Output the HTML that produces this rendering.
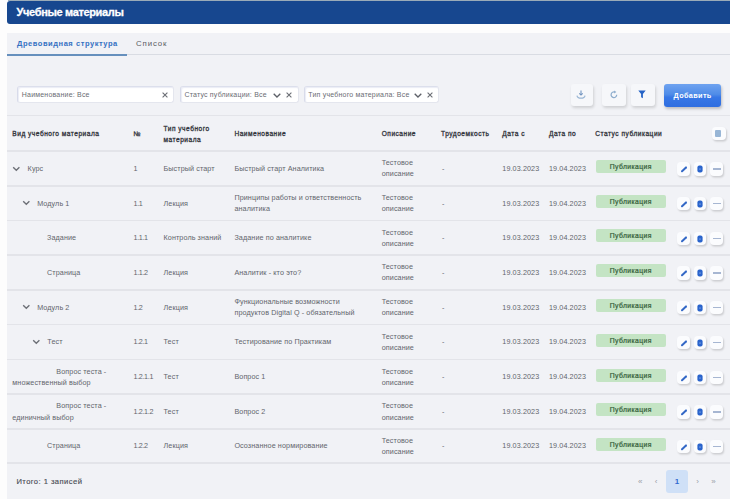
<!DOCTYPE html>
<html><head><meta charset="utf-8">
<style>
*{box-sizing:border-box;margin:0;padding:0}
html{background:#fdfdfd}
html,body{width:730px;height:499px;overflow:hidden;background:#fdfdfd;font-family:"Liberation Sans",sans-serif;color:#4a4d55}
.a{position:absolute}
#topline{left:8px;top:0;width:722px;height:1.2px;background:#9aabb8}
#hdr{left:7px;top:1px;width:723px;height:23px;background:#17478f;border-radius:3px 0 0 3px}
#hdr span{position:absolute;left:9.6px;top:5px;font-size:11px;font-weight:bold;color:#fff;letter-spacing:-0.35px;-webkit-text-stroke:0.3px #fff}
#card{left:7px;top:33px;width:723px;height:466px;background:#f1f2f6}
.tab{position:absolute;top:6.3px;font-size:7.5px;font-weight:bold;letter-spacing:0.55px}
.inp{position:absolute;top:53.3px;height:17px;background:#fff;border:1px solid #e4e6ee;border-left-color:#d8dbea;border-top-color:#dcdfec;box-shadow:inset 1px 1px 1px rgba(140,150,200,0.18);border-radius:3px;font-size:7px;color:#6a6c73;letter-spacing:0.2px}
.inp .t{position:absolute;left:3.5px;top:4.2px;white-space:nowrap}
.ibtn{position:absolute;top:51px;width:21px;height:21.5px;background:#f6f7fa;border-radius:3px;box-shadow:1px 2px 3px rgba(0,0,0,0.14)}
#add{left:656.7px;top:50.6px;width:57.8px;height:23px;border-radius:3px;background:linear-gradient(#6fa3f0 0%,#4f8ce8 45%,#3777e6 58%,#2f6ee0 100%);box-shadow:1px 2px 3px rgba(0,0,0,.22);color:#fff;font-size:7.3px;font-weight:bold;text-align:center;line-height:23px;letter-spacing:0.35px}
.hl{position:absolute;left:0;width:723px;height:1.5px;background:#e3e4e9}
.th{position:absolute;font-size:6.6px;font-weight:normal;-webkit-text-stroke:0.3px #34363d;color:#34363d;white-space:nowrap;line-height:11px;letter-spacing:0.5px}
.td{position:absolute;font-size:7.2px;color:#62656c;white-space:nowrap;line-height:11.3px;letter-spacing:0.1px}
.badge{position:absolute;width:70px;height:13px;background:#c4e4c4;border-radius:2px;color:#35603a;font-size:6.8px;font-weight:normal;-webkit-text-stroke:0.22px #35603a;text-align:center;line-height:13px;letter-spacing:0.4px}
.ab{position:absolute;width:13px;height:13.5px;background:#fbfcfe;border-radius:4px;box-shadow:1px 1.5px 2px rgba(0,0,0,.16)}
</style></head><body>
<div id="topline" class="a"></div>
<div id="hdr" class="a"><span>Учебные материалы</span></div>
<div id="card" class="a">
<div class="tab" style="left:10px;color:#3470c2">Древовидная структура</div>
<div class="tab" style="left:129px;color:#5a5c63;font-weight:normal;font-size:7.8px;letter-spacing:0.9px">Список</div>
<div class="hl" style="top:21px;height:1.2px;background:#d9dce3"></div>
<div class="a" style="left:0;top:20.5px;width:120px;height:2px;background:#6690bd"></div>
<div class="inp" style="left:10.3px;width:156.3px"><span class="t">Наименование: Все</span><svg class="a" style="left:143.3px;top:5px" width="6" height="6" viewBox="0 0 6 6"><path d="M0.6 0.6 L5.4 5.4 M5.4 0.6 L0.6 5.4" stroke="#6b6e75" stroke-width="1.1"/></svg></div>
<div class="inp" style="left:172.9px;width:119.2px"><span class="t">Статус публикации: Все</span><svg class="a" style="left:92.6px;top:6px" width="8" height="5" viewBox="0 0 8 5"><path d="M0.7 0.7 L4 4 L7.3 0.7" stroke="#5d6068" stroke-width="1.3" fill="none"/></svg><svg class="a" style="left:104.9px;top:5px" width="6" height="6" viewBox="0 0 6 6"><path d="M0.6 0.6 L5.4 5.4 M5.4 0.6 L0.6 5.4" stroke="#6b6e75" stroke-width="1.1"/></svg></div>
<div class="inp" style="left:296.8px;width:135.2px"><span class="t">Тип учебного материала: Все</span><svg class="a" style="left:109.7px;top:6px" width="8" height="5" viewBox="0 0 8 5"><path d="M0.7 0.7 L4 4 L7.3 0.7" stroke="#5d6068" stroke-width="1.3" fill="none"/></svg><svg class="a" style="left:122.7px;top:5px" width="6" height="6" viewBox="0 0 6 6"><path d="M0.6 0.6 L5.4 5.4 M5.4 0.6 L0.6 5.4" stroke="#6b6e75" stroke-width="1.1"/></svg></div>
<div class="ibtn" style="left:564px;width:22px"><svg class="a" style="left:5px;top:6px" width="10" height="9" viewBox="0 0 10 9"><path d="M5 0.5 V4.8" stroke="#7395c0" stroke-width="1.1" fill="none"/><path d="M3.3 3.3 L5 5 L6.7 3.3" stroke="#7395c0" stroke-width="1.1" fill="none"/><path d="M1 5.6 Q1.3 8.2 5 8.2 Q8.7 8.2 9 5.6" stroke="#9ab6d4" stroke-width="1.2" fill="none"/></svg></div>
<div class="ibtn" style="left:595px;width:24px"><svg class="a" style="left:7.6px;top:6.4px" width="8" height="9" viewBox="0 0 8 9"><path d="M6.7 4.8 A2.8 2.8 0 1 1 4.8 2.1" stroke="#8eadcd" stroke-width="1.25" fill="none"/><path d="M4.1 0.5 L6.4 2 L4.2 3.6 Z" fill="#8eadcd"/></svg></div>
<div class="ibtn" style="left:624px;width:23.5px"><svg class="a" style="left:6.8px;top:6px" width="8" height="9" viewBox="0 0 8 9"><path d="M0.3 0.6 H7.7 L4.9 4 V8.2 L3.1 7.2 V4 Z" fill="#2563c6"/></svg></div>
<div id="add" class="a">Добавить</div>
<div class="hl" style="top:81.75px"></div>
<div class="hl" style="top:117.25px"></div>
<div class="hl" style="top:152.05px"></div>
<div class="hl" style="top:186.65px"></div>
<div class="hl" style="top:221.25px"></div>
<div class="hl" style="top:256.05px"></div>
<div class="hl" style="top:290.65px"></div>
<div class="hl" style="top:325.65px"></div>
<div class="hl" style="top:360.35px"></div>
<div class="hl" style="top:395.05px"></div>
<div class="hl" style="top:429.15px"></div>
<div class="th" style="left:5.3px;top:95.0px">Вид учебного материала</div>
<div class="th" style="left:126.5px;top:95.0px">№</div>
<div class="th" style="left:156.5px;top:89.5px">Тип учебного<br>материала</div>
<div class="th" style="left:227.4px;top:95.0px">Наименование</div>
<div class="th" style="left:374.7px;top:95.0px">Описание</div>
<div class="th" style="left:434.0px;top:95.0px">Трудоемкость</div>
<div class="th" style="left:495.3px;top:95.0px">Дата с</div>
<div class="th" style="left:542.0px;top:95.0px">Дата по</div>
<div class="th" style="left:588.3px;top:95.0px">Статус публикации</div>
<div class="ab" style="left:705.0px;top:93.7px;width:14px;height:13.5px"><div class="a" style="left:3px;top:3.5px;width:5.8px;height:6.8px;background:#98b6d6;border-radius:1px"></div></div>
<div class="td" style="left:20.6px;top:129.8px">Курс</div>
<svg class="a" style="left:5.1px;top:132.5px" width="9" height="6" viewBox="0 0 9 6"><path d="M1.2 1.2 L4.3 4.3 L7.4 1.2" fill="none" stroke="#6c6f76" stroke-width="1.35"/></svg>
<div class="td" style="left:126.5px;top:129.8px;letter-spacing:-0.35px">1</div>
<div class="td" style="left:156.5px;top:129.8px">Быстрый старт</div>
<div class="td" style="left:227.4px;top:129.8px">Быстрый старт Аналитика</div>
<div class="td" style="left:374.7px;top:124.2px">Тестовое<br>описание</div>
<div class="td" style="left:435.0px;top:129.8px">-</div>
<div class="td" style="left:495.3px;top:129.8px">19.03.2023</div>
<div class="td" style="left:542.0px;top:129.8px">19.04.2023</div>
<div class="badge" style="left:588.8px;top:127.1px">Публикация</div>
<div class="ab" style="left:669.8px;top:129.2px"><svg class="a" style="left:3px;top:3px" width="8" height="8" viewBox="0 0 8 8"><path d="M2 6.2 L6 2.4" stroke="#3267c6" stroke-width="2" stroke-linecap="round"/></svg></div>
<div class="ab" style="left:687.0px;top:129.2px;width:12px"><svg class="a" style="left:3.3px;top:3px" width="6" height="8" viewBox="0 0 6 8"><rect x="0.4" y="0.6" width="5.2" height="7" rx="2" fill="#2a64cc"/><rect x="2.4" y="3.4" width="1.2" height="1.4" fill="#7fa6e8"/></svg></div>
<div class="ab" style="left:703.3px;top:129.2px"><div class="a" style="left:2.5px;top:6.2px;width:8px;height:1px;background:#a6b6d2;height:1.3px"></div></div>
<div class="td" style="left:30.2px;top:164.6px">Модуль 1</div>
<svg class="a" style="left:14.7px;top:167.2px" width="9" height="6" viewBox="0 0 9 6"><path d="M1.2 1.2 L4.3 4.3 L7.4 1.2" fill="none" stroke="#6c6f76" stroke-width="1.35"/></svg>
<div class="td" style="left:126.5px;top:164.6px;letter-spacing:-0.35px">1.1</div>
<div class="td" style="left:156.5px;top:164.6px">Лекция</div>
<div class="td" style="left:227.4px;top:158.9px">Принципы работы и ответственность<br>аналитика</div>
<div class="td" style="left:374.7px;top:158.9px">Тестовое<br>описание</div>
<div class="td" style="left:435.0px;top:164.6px">-</div>
<div class="td" style="left:495.3px;top:164.6px">19.03.2023</div>
<div class="td" style="left:542.0px;top:164.6px">19.04.2023</div>
<div class="badge" style="left:588.8px;top:161.8px">Публикация</div>
<div class="ab" style="left:669.8px;top:163.9px"><svg class="a" style="left:3px;top:3px" width="8" height="8" viewBox="0 0 8 8"><path d="M2 6.2 L6 2.4" stroke="#3267c6" stroke-width="2" stroke-linecap="round"/></svg></div>
<div class="ab" style="left:687.0px;top:163.9px;width:12px"><svg class="a" style="left:3.3px;top:3px" width="6" height="8" viewBox="0 0 6 8"><rect x="0.4" y="0.6" width="5.2" height="7" rx="2" fill="#2a64cc"/><rect x="2.4" y="3.4" width="1.2" height="1.4" fill="#7fa6e8"/></svg></div>
<div class="ab" style="left:703.3px;top:163.9px"><div class="a" style="left:2.5px;top:6.2px;width:8px;height:1px;background:#a6b6d2;height:1.3px"></div></div>
<div class="td" style="left:40.0px;top:199.1px">Задание</div>
<div class="td" style="left:126.5px;top:199.1px;letter-spacing:-0.35px">1.1.1</div>
<div class="td" style="left:156.5px;top:199.1px">Контроль знаний</div>
<div class="td" style="left:227.4px;top:199.1px">Задание по аналитике</div>
<div class="td" style="left:374.7px;top:193.5px">Тестовое<br>описание</div>
<div class="td" style="left:435.0px;top:199.1px">-</div>
<div class="td" style="left:495.3px;top:199.1px">19.03.2023</div>
<div class="td" style="left:542.0px;top:199.1px">19.04.2023</div>
<div class="badge" style="left:588.8px;top:196.4px">Публикация</div>
<div class="ab" style="left:669.8px;top:198.5px"><svg class="a" style="left:3px;top:3px" width="8" height="8" viewBox="0 0 8 8"><path d="M2 6.2 L6 2.4" stroke="#3267c6" stroke-width="2" stroke-linecap="round"/></svg></div>
<div class="ab" style="left:687.0px;top:198.5px;width:12px"><svg class="a" style="left:3.3px;top:3px" width="6" height="8" viewBox="0 0 6 8"><rect x="0.4" y="0.6" width="5.2" height="7" rx="2" fill="#2a64cc"/><rect x="2.4" y="3.4" width="1.2" height="1.4" fill="#7fa6e8"/></svg></div>
<div class="ab" style="left:703.3px;top:198.5px"><div class="a" style="left:2.5px;top:6.2px;width:8px;height:1px;background:#a6b6d2;height:1.3px"></div></div>
<div class="td" style="left:40.0px;top:233.9px">Страница</div>
<div class="td" style="left:126.5px;top:233.9px;letter-spacing:-0.35px">1.1.2</div>
<div class="td" style="left:156.5px;top:233.9px">Лекция</div>
<div class="td" style="left:227.4px;top:233.9px">Аналитик - кто это?</div>
<div class="td" style="left:374.7px;top:228.2px">Тестовое<br>описание</div>
<div class="td" style="left:435.0px;top:233.9px">-</div>
<div class="td" style="left:495.3px;top:233.9px">19.03.2023</div>
<div class="td" style="left:542.0px;top:233.9px">19.04.2023</div>
<div class="badge" style="left:588.8px;top:231.1px">Публикация</div>
<div class="ab" style="left:669.8px;top:233.2px"><svg class="a" style="left:3px;top:3px" width="8" height="8" viewBox="0 0 8 8"><path d="M2 6.2 L6 2.4" stroke="#3267c6" stroke-width="2" stroke-linecap="round"/></svg></div>
<div class="ab" style="left:687.0px;top:233.2px;width:12px"><svg class="a" style="left:3.3px;top:3px" width="6" height="8" viewBox="0 0 6 8"><rect x="0.4" y="0.6" width="5.2" height="7" rx="2" fill="#2a64cc"/><rect x="2.4" y="3.4" width="1.2" height="1.4" fill="#7fa6e8"/></svg></div>
<div class="ab" style="left:703.3px;top:233.2px"><div class="a" style="left:2.5px;top:6.2px;width:8px;height:1px;background:#a6b6d2;height:1.3px"></div></div>
<div class="td" style="left:30.2px;top:268.6px">Модуль 2</div>
<svg class="a" style="left:14.7px;top:271.2px" width="9" height="6" viewBox="0 0 9 6"><path d="M1.2 1.2 L4.3 4.3 L7.4 1.2" fill="none" stroke="#6c6f76" stroke-width="1.35"/></svg>
<div class="td" style="left:126.5px;top:268.6px;letter-spacing:-0.35px">1.2</div>
<div class="td" style="left:156.5px;top:268.6px">Лекция</div>
<div class="td" style="left:227.4px;top:262.9px">Функциональные возможности<br>продуктов Digital Q - обязательный</div>
<div class="td" style="left:374.7px;top:262.9px">Тестовое<br>описание</div>
<div class="td" style="left:435.0px;top:268.6px">-</div>
<div class="td" style="left:495.3px;top:268.6px">19.03.2023</div>
<div class="td" style="left:542.0px;top:268.6px">19.04.2023</div>
<div class="badge" style="left:588.8px;top:265.8px">Публикация</div>
<div class="ab" style="left:669.8px;top:267.9px"><svg class="a" style="left:3px;top:3px" width="8" height="8" viewBox="0 0 8 8"><path d="M2 6.2 L6 2.4" stroke="#3267c6" stroke-width="2" stroke-linecap="round"/></svg></div>
<div class="ab" style="left:687.0px;top:267.9px;width:12px"><svg class="a" style="left:3.3px;top:3px" width="6" height="8" viewBox="0 0 6 8"><rect x="0.4" y="0.6" width="5.2" height="7" rx="2" fill="#2a64cc"/><rect x="2.4" y="3.4" width="1.2" height="1.4" fill="#7fa6e8"/></svg></div>
<div class="ab" style="left:703.3px;top:267.9px"><div class="a" style="left:2.5px;top:6.2px;width:8px;height:1px;background:#a6b6d2;height:1.3px"></div></div>
<div class="td" style="left:40.3px;top:303.4px">Тест</div>
<svg class="a" style="left:24.8px;top:306.0px" width="9" height="6" viewBox="0 0 9 6"><path d="M1.2 1.2 L4.3 4.3 L7.4 1.2" fill="none" stroke="#6c6f76" stroke-width="1.35"/></svg>
<div class="td" style="left:126.5px;top:303.4px;letter-spacing:-0.35px">1.2.1</div>
<div class="td" style="left:156.5px;top:303.4px">Тест</div>
<div class="td" style="left:227.4px;top:303.4px">Тестирование по Практикам</div>
<div class="td" style="left:374.7px;top:297.7px">Тестовое<br>описание</div>
<div class="td" style="left:435.0px;top:303.4px">-</div>
<div class="td" style="left:495.3px;top:303.4px">19.03.2023</div>
<div class="td" style="left:542.0px;top:303.4px">19.04.2023</div>
<div class="badge" style="left:588.8px;top:300.6px">Публикация</div>
<div class="ab" style="left:669.8px;top:302.7px"><svg class="a" style="left:3px;top:3px" width="8" height="8" viewBox="0 0 8 8"><path d="M2 6.2 L6 2.4" stroke="#3267c6" stroke-width="2" stroke-linecap="round"/></svg></div>
<div class="ab" style="left:687.0px;top:302.7px;width:12px"><svg class="a" style="left:3.3px;top:3px" width="6" height="8" viewBox="0 0 6 8"><rect x="0.4" y="0.6" width="5.2" height="7" rx="2" fill="#2a64cc"/><rect x="2.4" y="3.4" width="1.2" height="1.4" fill="#7fa6e8"/></svg></div>
<div class="ab" style="left:703.3px;top:302.7px"><div class="a" style="left:2.5px;top:6.2px;width:8px;height:1px;background:#a6b6d2;height:1.3px"></div></div>
<div class="td" style="left:5.3px;top:332.6px;white-space:normal;width:105px;text-indent:44px">Вопрос теста - множественный выбор</div>
<div class="td" style="left:126.5px;top:338.2px;letter-spacing:-0.35px">1.2.1.1</div>
<div class="td" style="left:156.5px;top:338.2px">Тест</div>
<div class="td" style="left:227.4px;top:338.2px">Вопрос 1</div>
<div class="td" style="left:374.7px;top:332.6px">Тестовое<br>описание</div>
<div class="td" style="left:435.0px;top:338.2px">-</div>
<div class="td" style="left:495.3px;top:338.2px">19.03.2023</div>
<div class="td" style="left:542.0px;top:338.2px">19.04.2023</div>
<div class="badge" style="left:588.8px;top:335.5px">Публикация</div>
<div class="ab" style="left:669.8px;top:337.6px"><svg class="a" style="left:3px;top:3px" width="8" height="8" viewBox="0 0 8 8"><path d="M2 6.2 L6 2.4" stroke="#3267c6" stroke-width="2" stroke-linecap="round"/></svg></div>
<div class="ab" style="left:687.0px;top:337.6px;width:12px"><svg class="a" style="left:3.3px;top:3px" width="6" height="8" viewBox="0 0 6 8"><rect x="0.4" y="0.6" width="5.2" height="7" rx="2" fill="#2a64cc"/><rect x="2.4" y="3.4" width="1.2" height="1.4" fill="#7fa6e8"/></svg></div>
<div class="ab" style="left:703.3px;top:337.6px"><div class="a" style="left:2.5px;top:6.2px;width:8px;height:1px;background:#a6b6d2;height:1.3px"></div></div>
<div class="td" style="left:5.3px;top:367.3px;white-space:normal;width:105px;text-indent:44px">Вопрос теста - единичный выбор</div>
<div class="td" style="left:126.5px;top:372.9px;letter-spacing:-0.35px">1.2.1.2</div>
<div class="td" style="left:156.5px;top:372.9px">Тест</div>
<div class="td" style="left:227.4px;top:372.9px">Вопрос 2</div>
<div class="td" style="left:374.7px;top:367.3px">Тестовое<br>описание</div>
<div class="td" style="left:435.0px;top:372.9px">-</div>
<div class="td" style="left:495.3px;top:372.9px">19.03.2023</div>
<div class="td" style="left:542.0px;top:372.9px">19.04.2023</div>
<div class="badge" style="left:588.8px;top:370.2px">Публикация</div>
<div class="ab" style="left:669.8px;top:372.3px"><svg class="a" style="left:3px;top:3px" width="8" height="8" viewBox="0 0 8 8"><path d="M2 6.2 L6 2.4" stroke="#3267c6" stroke-width="2" stroke-linecap="round"/></svg></div>
<div class="ab" style="left:687.0px;top:372.3px;width:12px"><svg class="a" style="left:3.3px;top:3px" width="6" height="8" viewBox="0 0 6 8"><rect x="0.4" y="0.6" width="5.2" height="7" rx="2" fill="#2a64cc"/><rect x="2.4" y="3.4" width="1.2" height="1.4" fill="#7fa6e8"/></svg></div>
<div class="ab" style="left:703.3px;top:372.3px"><div class="a" style="left:2.5px;top:6.2px;width:8px;height:1px;background:#a6b6d2;height:1.3px"></div></div>
<div class="td" style="left:40.0px;top:407.3px">Страница</div>
<div class="td" style="left:126.5px;top:407.3px;letter-spacing:-0.35px">1.2.2</div>
<div class="td" style="left:156.5px;top:407.3px">Лекция</div>
<div class="td" style="left:227.4px;top:407.3px">Осознанное нормирование</div>
<div class="td" style="left:374.7px;top:401.7px">Тестовое<br>описание</div>
<div class="td" style="left:435.0px;top:407.3px">-</div>
<div class="td" style="left:495.3px;top:407.3px">19.03.2023</div>
<div class="td" style="left:542.0px;top:407.3px">19.04.2023</div>
<div class="badge" style="left:588.8px;top:404.6px">Публикация</div>
<div class="ab" style="left:669.8px;top:406.7px"><svg class="a" style="left:3px;top:3px" width="8" height="8" viewBox="0 0 8 8"><path d="M2 6.2 L6 2.4" stroke="#3267c6" stroke-width="2" stroke-linecap="round"/></svg></div>
<div class="ab" style="left:687.0px;top:406.7px;width:12px"><svg class="a" style="left:3.3px;top:3px" width="6" height="8" viewBox="0 0 6 8"><rect x="0.4" y="0.6" width="5.2" height="7" rx="2" fill="#2a64cc"/><rect x="2.4" y="3.4" width="1.2" height="1.4" fill="#7fa6e8"/></svg></div>
<div class="ab" style="left:703.3px;top:406.7px"><div class="a" style="left:2.5px;top:6.2px;width:8px;height:1px;background:#a6b6d2;height:1.3px"></div></div>
<div class="td" style="left:9.4px;top:443.0px;font-weight:normal;color:#4a4d55;font-size:7.6px;letter-spacing:0.45px;-webkit-text-stroke:0.15px #4a4d55">Итого: 1 записей</div>
<div class="a" style="left:659.0px;top:436.6px;width:22px;height:23px;background:#cfe0f7;border-radius:3px;color:#2f6bd0;font-weight:bold;font-size:8px;text-align:center;line-height:23px">1</div>
<div class="a" style="left:628.3px;top:444.3px;width:10px;text-align:center;font-size:8px;color:#9a9ea8;line-height:10px">«</div>
<div class="a" style="left:644.2px;top:444.3px;width:10px;text-align:center;font-size:8px;color:#9a9ea8;line-height:10px">‹</div>
<div class="a" style="left:685.6px;top:444.3px;width:10px;text-align:center;font-size:8px;color:#9a9ea8;line-height:10px">›</div>
<div class="a" style="left:701.4px;top:444.3px;width:10px;text-align:center;font-size:8px;color:#9a9ea8;line-height:10px">»</div>
</div>
</body></html>
